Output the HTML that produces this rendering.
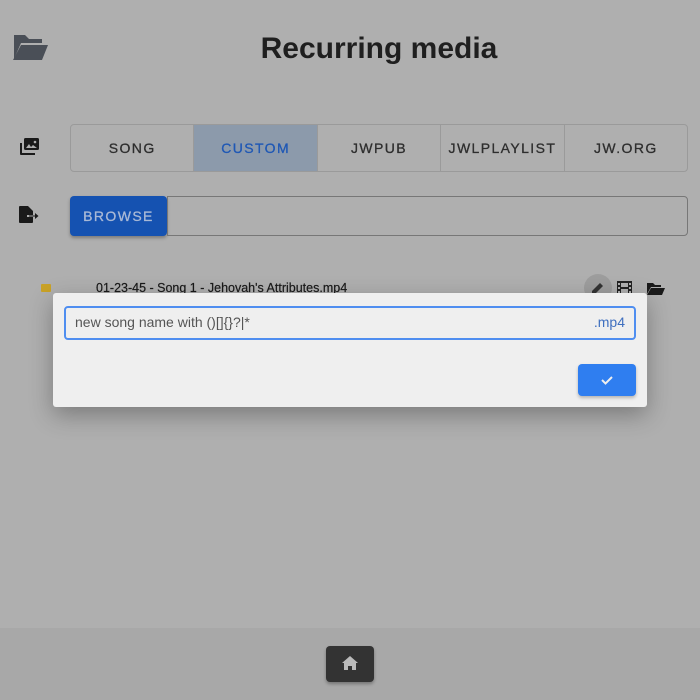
<!DOCTYPE html>
<html><head><meta charset="utf-8"><style>
*{box-sizing:border-box;margin:0;padding:0}
body{width:700px;height:700px;background:#afafaf;font-family:"Liberation Sans",sans-serif;position:relative;overflow:hidden}
.abs{position:absolute}
h1{position:absolute;left:0;width:758px;top:32px;text-align:center;font-size:30px;font-weight:bold;color:#1f1f1f}
.tabs{left:70px;top:124px;width:618px;height:48px;border:1px solid #9a9a9a;border-radius:4px;display:flex;overflow:hidden}
.tabs div{flex:1;display:flex;align-items:center;justify-content:center;font-size:14px;letter-spacing:1.4px;color:#2e2e2e;border-left:1px solid #9a9a9a;-webkit-text-stroke:0.3px #2e2e2e}
.tabs div:first-child{border-left:none}
.tabs .act{background:#8c9aab;color:#1f58b5;-webkit-text-stroke:0.3px #1f58b5}
.browse{left:70px;top:196px;width:97px;height:40px;background:#1552b1;border-radius:4px;color:#a9b9d6;font-size:14px;letter-spacing:1.4px;display:flex;align-items:center;justify-content:center;box-shadow:0 2px 3px rgba(0,0,0,.3);-webkit-text-stroke:0.3px #a9b9d6}
.field{left:167px;top:196px;width:521px;height:40px;border:1px solid #777;border-radius:0 4px 4px 0}
.dialog{left:53px;top:293px;width:594px;height:114px;background:#efefef;border-radius:3px;box-shadow:0 8px 24px rgba(0,0,0,.3)}
.inp{left:11px;top:13px;width:572px;height:34px;border:2px solid #4f8ef0;border-radius:4px;font-size:14px;color:#555;padding:6px 9px}
.ok{left:525px;top:71px;width:58px;height:32px;background:#2f7ef0;border-radius:4px;box-shadow:0 2px 3px rgba(0,0,0,.25)}
.footer{left:0;top:628px;width:700px;height:72px;background:#a8a8a8}
.home{left:326px;top:646px;width:48px;height:36px;background:#333;border-radius:4px;box-shadow:0 2px 3px rgba(0,0,0,.3)}
</style></head><body>
<svg class="abs" style="left:12px;top:33px" width="36" height="28" viewBox="0 0 36 28"><path d="M2 2h11l4 4h13v4H9L2 26z" fill="#4a4f57"/><path d="M9 12h27l-6 15H1z" fill="#4a4f57"/></svg>
<h1>Recurring media</h1>
<svg class="abs" style="left:19px;top:138px" width="21" height="18" viewBox="0 0 21 18"><rect x="5" y="0" width="15" height="12" rx="1.5" fill="#1a1a1a"/><path d="M7 10l3-4 2 3 2-2 4 3z" fill="#afafaf"/><circle cx="16" cy="4" r="1.3" fill="#afafaf"/><path d="M1 5h2v10h13v2H2a1 1 0 01-1-1z" fill="#1a1a1a"/></svg>
<div class="abs tabs"><div>SONG</div><div class="act">CUSTOM</div><div>JWPUB</div><div>JWLPLAYLIST</div><div>JW.ORG</div></div>
<svg class="abs" style="left:19px;top:206px" width="20" height="18" viewBox="0 0 20 18"><path d="M1 0h8l5 5v4H8v2h6v5a1 1 0 01-1 1H1a1 1 0 01-1-1V1a1 1 0 011-1z" fill="#1a1a1a"/><path d="M10 9.5h6V7l3.5 3-3.5 3v-2.5h-6z" fill="#1a1a1a"/></svg>
<div class="abs browse">BROWSE</div>
<div class="abs field"></div>
<div class="abs" style="left:41px;top:284px;width:10px;height:8px;background:#c9a227;border-radius:1px"></div>
<div class="abs" style="left:96px;top:281px;font-size:12.5px;color:#1a1a1a;-webkit-text-stroke:0.2px #1a1a1a">01-23-45 - Song 1 - Jehovah's Attributes.mp4</div>
<div class="abs" style="left:584px;top:274px;width:28px;height:28px;border-radius:50%;background:#9d9d9d"></div>
<svg class="abs" style="left:591px;top:281px" width="14" height="14" viewBox="0 0 14 14"><path d="M1 10l8-8 3 3-8 8H1z" fill="#333"/></svg>
<svg class="abs" style="left:617px;top:281px" width="15" height="14" viewBox="0 0 15 14"><rect x="0" y="0" width="15" height="14" fill="#222"/><rect x="4" y="2" width="7" height="4" fill="#afafaf"/><rect x="4" y="8" width="7" height="4" fill="#afafaf"/><rect x="1" y="2" width="2" height="2" fill="#afafaf"/><rect x="1" y="6" width="2" height="2" fill="#afafaf"/><rect x="1" y="10" width="2" height="2" fill="#afafaf"/><rect x="12" y="2" width="2" height="2" fill="#afafaf"/><rect x="12" y="6" width="2" height="2" fill="#afafaf"/><rect x="12" y="10" width="2" height="2" fill="#afafaf"/></svg>
<svg class="abs" style="left:647px;top:282px" width="18" height="13" viewBox="0 0 18 13"><path d="M0 1h6l2 2h6v2H4L0 12z" fill="#1a1a1a"/><path d="M4 6h14l-3 7H0z" fill="#1a1a1a"/></svg>
<div class="abs dialog">
<div class="abs inp">new song name with ()[]{}?|*<span style="position:absolute;right:9px;top:6px;color:#3f6fbf">.mp4</span></div>
<div class="abs ok"><svg style="position:absolute;left:22px;top:10px" width="14" height="12" viewBox="0 0 14 12"><path d="M2 6l3.5 3.5L12 3" stroke="#eee" stroke-width="2" fill="none"/></svg></div>
</div>
<div class="abs footer"></div>
<div class="abs home"><svg style="position:absolute;left:16px;top:10px" width="16" height="15" viewBox="0 0 16 15"><path d="M8 0l8 7h-2v7H10V10H6v4H2V7H0z" fill="#bbb"/></svg></div>
</body></html>
